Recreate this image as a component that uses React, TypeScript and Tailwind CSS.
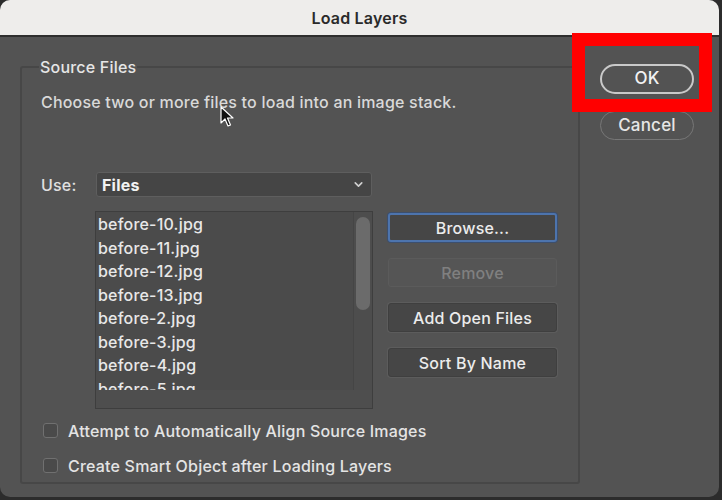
import { ChevronDown } from "lucide-react";

const files = [
    "before-10.jpg",
    "before-11.jpg",
    "before-12.jpg",
    "before-13.jpg",
    "before-2.jpg",
    "before-3.jpg",
    "before-4.jpg",
    "before-5.jpg",
];

function SideButton({ label, isFocused, isDisabled }: { label: string; isFocused?: boolean; isDisabled?: boolean }) {
    const base = "flex h-[29px] w-[169px] items-center justify-center rounded-[3px] text-[16px] font-medium";
    if (isDisabled) {
        return <div className={`${base} border border-[#5b5b5b] bg-[#555555] text-[#808080]`}>{label}</div>;
    }
    if (isFocused) {
        return (
            <div className={`${base} border-2 border-[#4d74ad] bg-[#464646] text-[#ececec] shadow-[0_0_0_1px_#3c4f6e]`}>
                {label}
            </div>
        );
    }
    return <div className={`${base} border border-[#3f3f3f] bg-[#464646] text-[#ececec] shadow-[0_0_0_1px_#5c5c5c]`}>{label}</div>;
}

function Checkbox({ label }: { label: string }) {
    return (
        <div className="flex h-[35px] items-center">
            <div className="ml-[3px] size-[15px] rounded-[3px] border border-[#707070] bg-[#4a4a4a]" />
            <span className="ml-[10px] text-[16px] font-medium text-[#e4e4e4]">{label}</span>
        </div>
    );
}

function Cursor() {
    return (
        <svg className="absolute left-[220px] top-[106px]" width="14" height="22" viewBox="0 0 14 22">
            <path d="M1 1 L1 17 L5 13 L8 20 L10.5 19 L7.5 12 L13 12 Z" fill="#111" stroke="#fff" strokeWidth="1.2" strokeLinejoin="round" />
        </svg>
    );
}

export default function App() {
    return (
        <div className="relative h-[500px] w-[722px] overflow-hidden bg-[#2c2c2c] font-['Inter','Liberation_Sans',Arial,sans-serif] tracking-[0.2px]">
            <div className="flex h-[497px] w-[719px] flex-col overflow-hidden rounded-[10px] bg-[#535353]">
                <div className="flex h-[37px] shrink-0 items-center justify-center border-b-2 border-[#2e2e2e] bg-[#eeedeb]">
                    <span className="text-[16px] font-semibold text-[#2a2a2a]">Load Layers</span>
                </div>

                <div className="flex flex-1 gap-[20px] pl-[20px] pt-[18px]">
                    <fieldset className="h-[429px] w-[560px] rounded-[3px] border-2 border-[#474747] pl-[19px] pr-[10px]">
                        <legend className="-ml-[2px] px-[1px] text-[16px] font-medium text-[#e6e6e6]">Source Files</legend>

                        <p className="mt-[11px] text-[16px] font-medium text-[#d9d9d9]">Choose two or more files to load into an image stack.</p>

                        <div className="mt-[58px] flex items-center">
                            <span className="w-[55px] text-[16px] font-medium text-[#e0e0e0]">Use:</span>
                            <div className="flex h-[25px] w-[276px] items-center justify-between rounded-[3px] border border-[#5e5e5e] bg-[#454545] pl-[5px] pr-[6px]">
                                <span className="text-[16px] font-bold text-[#f2f2f2]">Files</span>
                                <ChevronDown className="size-[13px] text-[#d0d0d0]" strokeWidth={3} />
                            </div>
                        </div>

                        <div className="mt-[14px] flex gap-[15px] pl-[54px]">
                            <div className="flex h-[198px] w-[278px] flex-col overflow-hidden border border-[#3e3e3e] bg-[#4b4b4b]">
                                <div className="flex min-h-0 flex-1">
                                    <div className="min-h-0 flex-1 overflow-hidden pl-[2px] pt-[1px]">
                                        {files.map((f) => (
                                            <div key={f} className="h-[23.5px] text-[16px] font-medium leading-[23.5px] text-[#e8e8e8]">
                                                {f}
                                            </div>
                                        ))}
                                    </div>
                                    <div className="w-[19px] border-l border-[#454545] bg-[#4d4d4d] px-[2px] pt-[5px]">
                                        <div className="h-[93px] w-[14px] rounded-full bg-[#6b6b6b]" />
                                    </div>
                                </div>
                                <div className="h-[18px] shrink-0 bg-[#4e4e4e]" />
                            </div>

                            <div className="flex flex-col gap-[16px] pt-[2px]">
                                <SideButton label="Browse..." isFocused />
                                <SideButton label="Remove" isDisabled />
                                <SideButton label="Add Open Files" />
                                <SideButton label="Sort By Name" />
                            </div>
                        </div>

                        <div className="-ml-[1px] mt-[4px]">
                            <Checkbox label="Attempt to Automatically Align Source Images" />
                            <Checkbox label="Create Smart Object after Loading Layers" />
                        </div>
                    </fieldset>

                    <div className="flex flex-col gap-[17px] pt-[9px]">
                        <div className="flex h-[30px] w-[94px] items-center justify-center rounded-full border-2 border-[#c9c9c9] text-[17px] font-medium text-[#f2f2f2]">
                            OK
                        </div>
                        <div className="flex h-[29px] w-[94px] items-center justify-center rounded-full border border-[#777777] text-[17px] font-medium text-[#e6e6e6]">
                            Cancel
                        </div>
                    </div>
                </div>
            </div>

            <div className="absolute left-[572px] top-[33px] h-[79px] w-[140px] border-[13px] border-[#ff0000]" />
            <Cursor />
        </div>
    );
}
